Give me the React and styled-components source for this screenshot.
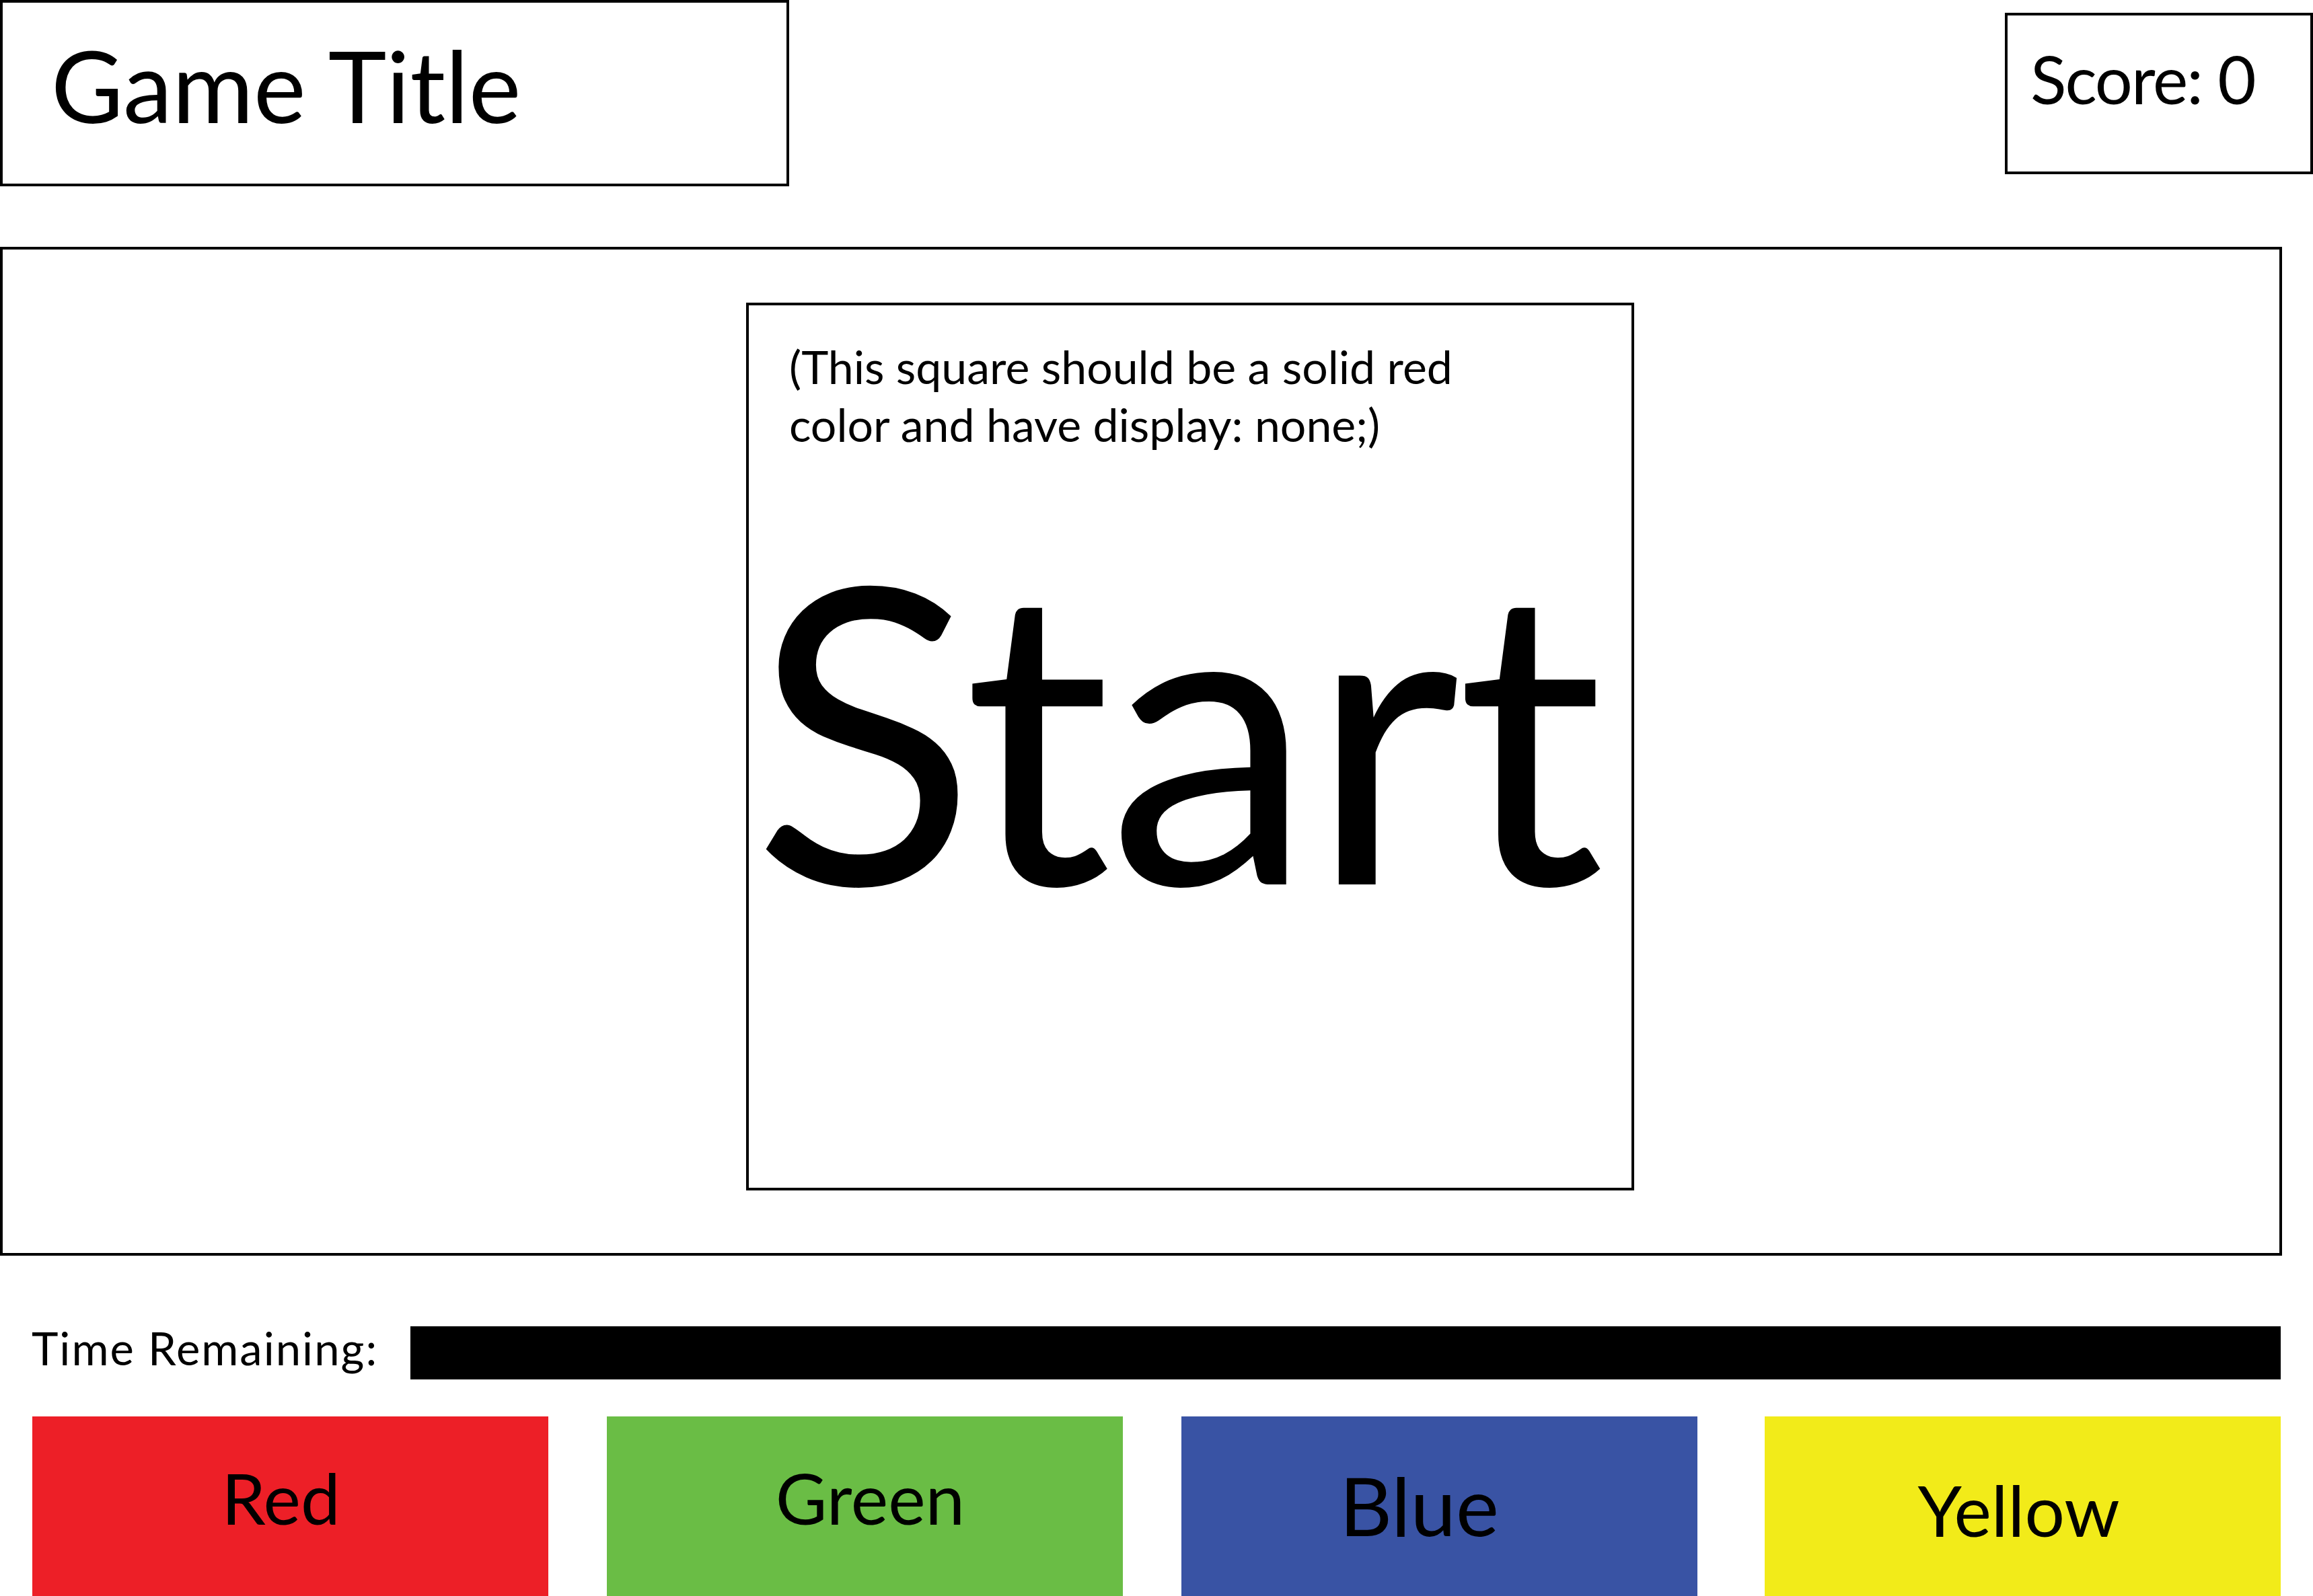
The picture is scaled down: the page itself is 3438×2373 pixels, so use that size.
import React from 'react'
import styled, { createGlobalStyle } from 'styled-components'

const GlobalStyle = createGlobalStyle`
  html, body {
    margin: 0;
    padding: 0;
    background: #ffffff;
    overflow: hidden;
  }
  body {
    font-family: Lato, "Open Sans", "Liberation Sans", sans-serif;
    color: #000000;
  }
`

const Page = styled.div`
  width: 3438px;
  height: 2373px;
  display: flex;
  flex-direction: column;
`

const Header = styled.header`
  display: flex;
  justify-content: space-between;
  align-items: flex-start;
`

const TitleBox = styled.div`
  width: 1173px;
  height: 277px;
  box-sizing: border-box;
  border: 4px solid #000;
  padding: 49px 0 0 72px;
`

const Title = styled.h1`
  margin: 0;
  font-size: 147px;
  font-weight: 400;
  line-height: 1;
`

const ScoreBox = styled.div`
  margin-top: 19px;
  width: 458px;
  height: 240px;
  box-sizing: border-box;
  border: 4px solid #000;
  padding: 44px 0 0 34px;
  font-size: 99px;
  letter-spacing: -2px;
  line-height: 1;
`

const Board = styled.main`
  margin-top: 90px;
  width: 3392px;
  height: 1500px;
  box-sizing: border-box;
  border: 4px solid #000;
  padding: 79px 0 0 1105px;
`

const Square = styled.div`
  width: 1320px;
  height: 1320px;
  box-sizing: border-box;
  border: 4px solid #000;
  padding: 48px 0 0 60px;
  display: flex;
  flex-direction: column;
`

const Note = styled.p`
  margin: 0;
  width: 1040px;
  font-size: 68px;
  line-height: 86px;
`

const StartLabel = styled.div`
  margin: 98px 0 0 -60px;
  padding-right: 40px;
  text-align: center;
  font-size: 613px;
  letter-spacing: -5px;
  line-height: 1;
`

const TimerRow = styled.div`
  margin-top: 104px;
  padding: 0 48px 0 47px;
  display: flex;
  align-items: flex-start;
  gap: 40px;
`

const TimerLabel = styled.span`
  flex: 0 0 523px;
  font-size: 67px;
  letter-spacing: 2px;
  line-height: 1;
  white-space: nowrap;
`

const TimerBar = styled.div`
  flex: 1;
  height: 79px;
  margin-top: 1px;
  background: #000;
`

const ButtonRow = styled.div`
  margin-top: 55px;
  padding: 0 48px;
  display: flex;
  gap: 87px;

  & > :last-child {
    margin-left: auto;
  }
`

const ColorButton = styled.button`
  flex: 0 0 767px;
  height: 267px;
  border: none;
  border-radius: 0;
  margin: 0;
  padding: ${(p) => p.$top}px 0 0 0;
  display: flex;
  justify-content: center;
  align-items: flex-start;
  background: ${(p) => p.$bg};
  color: #000;
  font-family: inherit;
  font-size: ${(p) => p.$size}px;
  line-height: 1;
  cursor: pointer;
`

const ButtonText = styled.span`
  position: relative;
  left: ${(p) => p.$nudge}px;
`

const buttons = [
  { label: 'Red', bg: '#ED1F27', size: 105, top: 68, nudge: -14 },
  { label: 'Green', bg: '#6ABD45', size: 105, top: 68, nudge: 8 },
  { label: 'Blue', bg: '#3953A4', size: 121, top: 71, nudge: -30 },
  { label: 'Yellow', bg: '#F2EB19', size: 105, top: 86, nudge: -6 },
]

const App = () => {
  return (
    <>
      <GlobalStyle />
      <Page>
        <Header>
          <TitleBox>
            <Title>Game Title</Title>
          </TitleBox>
          <ScoreBox>Score: 0</ScoreBox>
        </Header>

        <Board>
          <Square>
            <Note>
              (This square should be a solid red color and have display: none;)
            </Note>
            <StartLabel>Start</StartLabel>
          </Square>
        </Board>

        <TimerRow>
          <TimerLabel>Time Remaining:</TimerLabel>
          <TimerBar />
        </TimerRow>

        <ButtonRow>
          {buttons.map((b) => (
            <ColorButton key={b.label} $bg={b.bg} $size={b.size} $top={b.top}>
              <ButtonText $nudge={b.nudge}>{b.label}</ButtonText>
            </ColorButton>
          ))}
        </ButtonRow>
      </Page>
    </>
  )
}

export default App
